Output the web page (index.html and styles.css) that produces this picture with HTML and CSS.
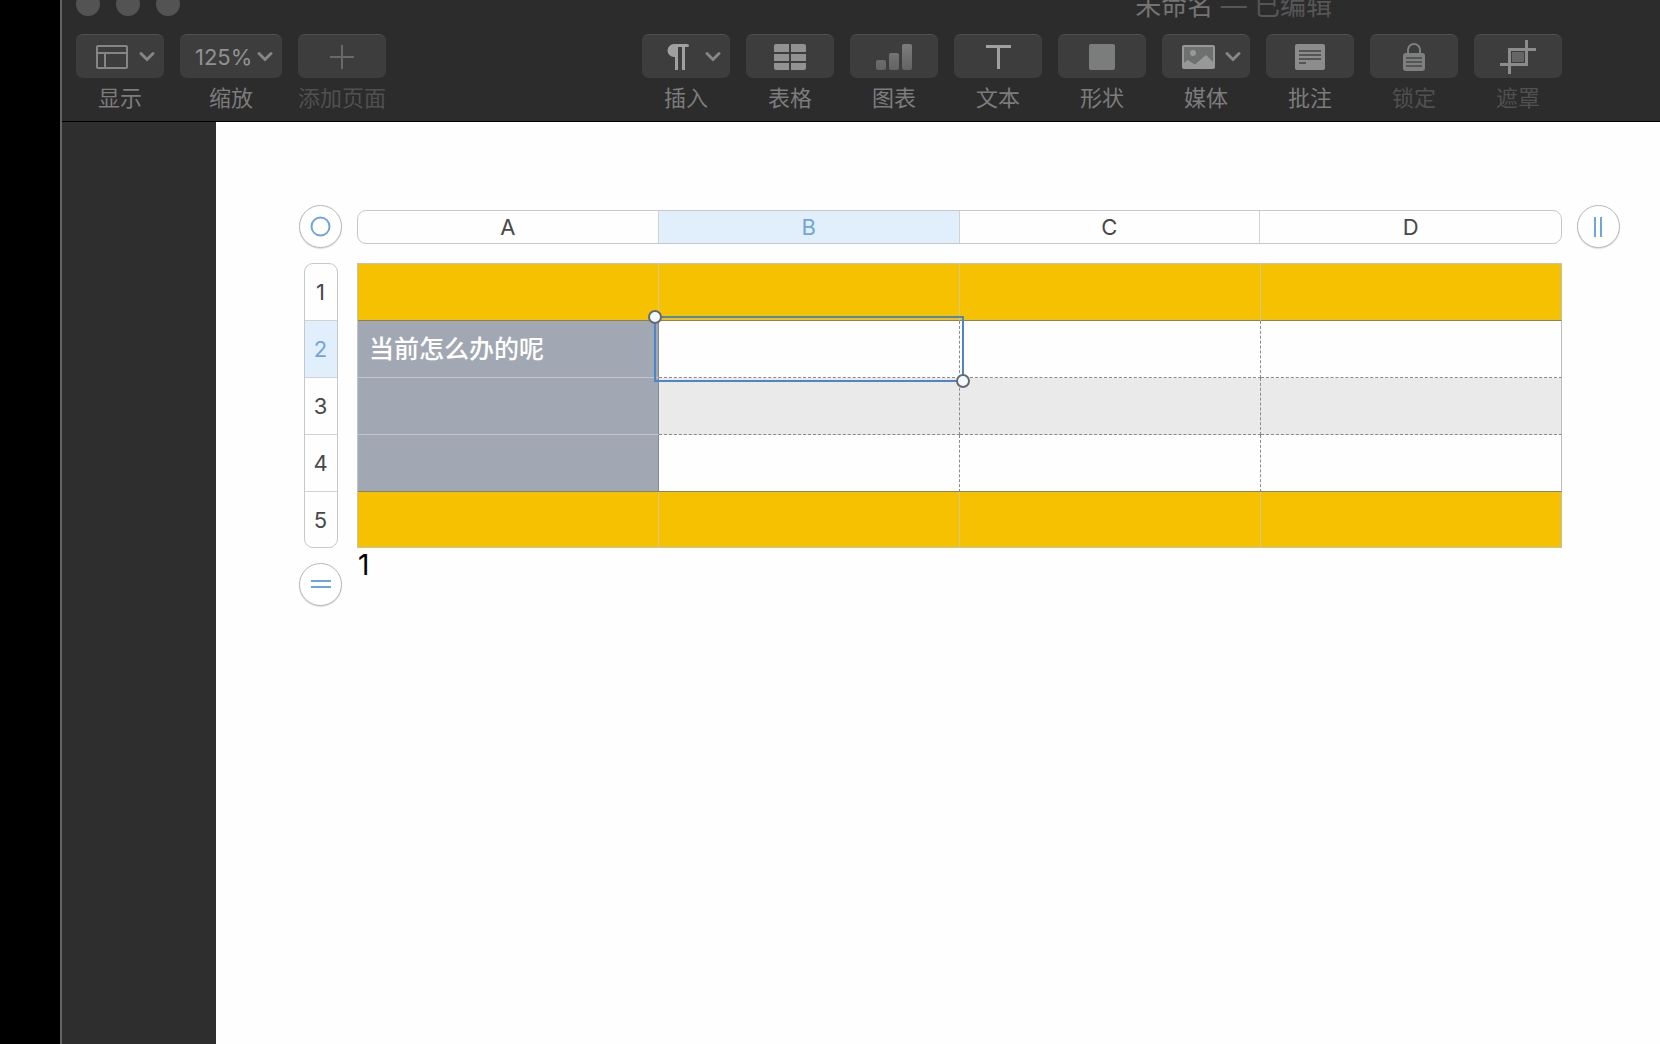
FILE: index.html
```html
<!DOCTYPE html>
<html lang="zh-CN">
<head>
  <meta charset="UTF-8" />
  <meta name="viewport" content="width=device-width, initial-scale=1.0"/>
  <title>未命名</title>
  <link rel="stylesheet" href="styles.css">
</head>
<body>

  <div class="window">
    <header class="toolbar">
      <div class="titlebar">
        <div class="lights"><i></i><i></i><i></i></div>
        <div class="title">未命名 <span>— 已编辑</span></div>
      </div>

      <div class="tools">
        <button type="button" class="tool">
          <span class="face menu">
            <svg class="icon" viewBox="0 0 36 36" fill="none" stroke="#858585" stroke-width="2"><rect x="2" y="7" width="30" height="22" rx="1"/><path d="M2 14H32M10 14V29"/></svg>
            <svg class="chevron" viewBox="0 0 16 12"><path d="M2 2.500L8 8.500L14 2.500"/></svg>
          </span>
          <span class="label">显示</span>
        </button>
        <button type="button" class="tool wide">
          <span class="face menu zoom">
            125%
            <svg class="chevron" viewBox="0 0 16 12"><path d="M2 2.500L8 8.500L14 2.500"/></svg>
          </span>
          <span class="label">缩放</span>
        </button>
        <button type="button" class="tool" disabled>
          <span class="face">
            <svg class="icon" viewBox="0 0 36 36" stroke="#696969" stroke-width="2"><path d="M6 18H30M18 6V30"/></svg>
          </span>
          <span class="label">添加页面</span>
        </button>

        <div class="insert">
          <button type="button" class="tool">
            <span class="face menu">
              <svg class="icon" viewBox="0 0 36 36" fill="#a0a0a0"><path d="M13 5H26Q28 5 28 6.500T26 8H24V31H21V8H17V31H14V18H13A6.500 6.500 0 0 1 13 5Z"/></svg>
              <svg class="chevron" viewBox="0 0 16 12"><path d="M2 2.500L8 8.500L14 2.500"/></svg>
            </span>
            <span class="label">插入</span>
          </button>
          <button type="button" class="tool">
            <span class="face">
              <svg class="icon" viewBox="0 0 36 36" fill="#929292"><path d="M4 5H17V13H2V7Q2 5 4 5ZM19 5H32Q34 5 34 7V13H19ZM2 15H17V22H2ZM19 15H34V22H19ZM2 24H17V31H4Q2 31 2 29ZM19 24H34V29Q34 31 32 31H19Z"/></svg>
            </span>
            <span class="label">表格</span>
          </button>
          <button type="button" class="tool">
            <span class="face">
              <svg class="icon" viewBox="0 0 36 36" fill="url(#bars)"><defs><linearGradient id="bars" gradientUnits="userSpaceOnUse" x1="0" y1="5" x2="0" y2="31"><stop stop-color="#7c7c7c"/><stop offset="1" stop-color="#636363"/></linearGradient></defs><rect x="0" y="21" width="10" height="10" rx="2"/><rect x="13" y="14" width="10" height="17" rx="2"/><rect x="26" y="5" width="10" height="26" rx="2"/></svg>
            </span>
            <span class="label">图表</span>
          </button>
          <button type="button" class="tool">
            <span class="face">
              <svg class="icon" viewBox="0 0 36 36" fill="#a0a0a0"><path d="M6 6H31V9H20V30H17V9H6Z"/></svg>
            </span>
            <span class="label">文本</span>
          </button>
          <button type="button" class="tool">
            <span class="face">
              <svg class="icon" viewBox="0 0 36 36" fill="#7b7d7c"><rect x="5" y="5" width="26" height="26" rx="2"/></svg>
            </span>
            <span class="label">形状</span>
          </button>
          <button type="button" class="tool">
            <span class="face menu">
              <svg class="icon" viewBox="0 0 36 36"><rect x="2" y="7" width="31" height="22" rx="1" fill="#6e706f" stroke="#989898" stroke-width="2"/><circle cx="12" cy="14" r="3" fill="#989898"/><path d="M2 25L6.500 21L14 25.500L25 16L33 24V29H2Z" fill="#989898"/></svg>
              <svg class="chevron" viewBox="0 0 16 12"><path d="M2 2.500L8 8.500L14 2.500"/></svg>
            </span>
            <span class="label">媒体</span>
          </button>
          <button type="button" class="tool">
            <span class="face">
              <svg class="icon" viewBox="0 0 36 36"><rect x="3" y="5" width="30" height="26" rx="2" fill="#8c8c8c"/><path d="M7 12H29M7 16H29M7 20H29M7 24H14" stroke="#555" stroke-width="2"/></svg>
            </span>
            <span class="label">批注</span>
          </button>
          <button type="button" class="tool" disabled>
            <span class="face">
              <svg class="icon" viewBox="0 0 36 36"><rect x="7" y="14" width="22" height="18" rx="3" fill="#7e807f"/><path d="M12 15V11A6 6 0 0 1 24 11V15" fill="none" stroke="#7e807f" stroke-width="2"/><path d="M10 19H26M10 23H26M10 27H26" stroke="#555" stroke-width="2"/></svg>
            </span>
            <span class="label">锁定</span>
          </button>
          <button type="button" class="tool" disabled>
            <span class="face">
              <svg class="icon" viewBox="0 0 36 36"><rect x="12" y="13" width="12" height="10" fill="#656565"/><path d="M0 25.500H26.500V1M36 10.500H9.500V35" fill="none" stroke="#8c8c8c" stroke-width="3"/></svg>
            </span>
            <span class="label">遮罩</span>
          </button>
        </div>
      </div>
    </header>

    <main class="page">
      <div class="sheet">
        <button type="button" class="knob" aria-label="选择表格">
          <svg viewBox="0 0 43 43"><circle cx="21.500" cy="21.500" r="9"/></svg>
        </button>
        <div class="cols">
          <button type="button">A</button>
          <button type="button" class="active">B</button>
          <button type="button">C</button>
          <button type="button">D</button>
        </div>
        <button type="button" class="knob" aria-label="添加列">
          <svg viewBox="0 0 43 43"><path d="M18 12V32M24 12V32"/></svg>
        </button>

        <div class="side">
          <div class="rows">
            <button type="button">1</button>
            <button type="button" class="active">2</button>
            <button type="button">3</button>
            <button type="button">4</button>
            <button type="button">5</button>
          </div>
          <button type="button" class="knob" aria-label="添加行">
            <svg viewBox="0 0 43 43"><path d="M12 18H32M12 24H32"/></svg>
          </button>
        </div>

        <div class="content">
          <table>
            <thead>
              <tr><th></th><th></th><th></th><th></th></tr>
            </thead>
            <tbody>
              <tr>
                <th scope="row">当前怎么办的呢</th>
                <td class="current"><div class="selection"></div></td>
                <td></td>
                <td></td>
              </tr>
              <tr class="alt"><th scope="row"></th><td></td><td></td><td></td></tr>
              <tr><th scope="row"></th><td></td><td></td><td></td></tr>
            </tbody>
            <tfoot>
              <tr><td></td><td></td><td></td><td></td></tr>
            </tfoot>
          </table>
          <p>1</p>
        </div>
      </div>
    </main>
  </div>

</body>
</html>
```
FILE: styles.css
```css
*,
*::before,
*::after {
  box-sizing: border-box;
}

body {
  margin: 0;
  padding-left: 60px;
  background-color: #000;
  font-family: Inter, "Noto Sans CJK SC", sans-serif;
}

button {
  margin: 0;
  padding: 0;
  border: none;
  background: none;
  font: inherit;
  color: inherit;
}

.window {
  display: flex;
  flex-direction: column;
  min-height: 100vh;
  border-left: 2px solid #636363;
  background-color: #2e2e2e;
}

/* toolbar */
.toolbar {
  height: 122px;
  padding: 0 98px 0 14px;
  border-bottom: 1px solid #000;
  background-color: #2c2c2c;
  overflow: hidden;
}

.titlebar {
  display: flex;
  justify-content: space-between;
  align-items: flex-start;
  height: 34px;
  padding-right: 230px;
}

.lights {
  display: flex;
  gap: 16px;
  margin-top: -8px;
}

.lights i {
  width: 24px;
  height: 24px;
  border-radius: 50%;
  background-color: #535353;
}

.title {
  margin-top: -13px;
  font-size: 26px;
  line-height: 38px;
  color: #747474;
  white-space: nowrap;
}

.title span {
  color: #565656;
}

.tools,
.insert {
  display: flex;
  gap: 16px;
}

.insert {
  margin-left: auto;
}

.tool {
  width: 88px;
  color: #7c7c7c;
}

.tool.wide {
  width: 102px;
}

.tool:disabled {
  color: #505050;
}

.face {
  display: flex;
  align-items: center;
  justify-content: center;
  height: 44px;
  border-top: 1px solid #515151;
  border-radius: 7px;
  background-color: #3d3d3d;
}

.menu {
  justify-content: space-between;
  padding: 0 9px 0 19px;
}

.zoom {
  padding-left: 15px;
  font-size: 22px;
  color: #929292;
}

.icon {
  width: 36px;
  height: 36px;
}

.chevron {
  width: 16px;
  height: 12px;
  fill: none;
  stroke: #858585;
  stroke-width: 3px;
  stroke-linecap: round;
}

.label {
  display: block;
  margin-top: 5px;
  font-size: 22px;
  line-height: 30px;
  white-space: nowrap;
}

/* page */
.page {
  flex: 1;
  margin-left: 154px;
  padding: 83px 40px 40px 83px;
  background-color: #fefefe;
}

.sheet {
  display: grid;
  grid-template-columns: 43px 1fr 43px;
  gap: 15px;
  align-items: center;
}

.knob {
  width: 43px;
  height: 43px;
  border: 1px solid #b8b8b8;
  border-radius: 50%;
  background-color: #fff;
  box-shadow: 0 1px 1px #ddd;
}

.knob svg {
  display: block;
  margin: -1px;
  width: 43px;
  height: 43px;
  fill: none;
  stroke: #70a5dc;
  stroke-width: 2px;
}

.cols,
.rows {
  display: grid;
  border: 1px solid #c6c8ca;
  border-radius: 9px;
  overflow: hidden;
  font-size: 22px;
  color: #484848;
}

.cols {
  grid-template-columns: repeat(4, 1fr);
  height: 34px;
}

.cols button {
  border-right: 1px solid #d0d2d4;
}

.rows button {
  border-bottom: 1px solid #d0d2d4;
}

.cols button:last-child,
.rows button:last-child {
  border: none;
}

.cols .active,
.rows .active {
  background-color: #e1effc;
  color: #74a5d4;
}

.side {
  display: flex;
  flex-direction: column;
  align-items: center;
  gap: 15px;
}

.rows {
  width: 34px;
  grid-template-rows: repeat(4, 57px) 55px;
}

.content {
  align-self: start;
}

table {
  width: 100%;
  table-layout: fixed;
  border-collapse: separate;
  border-spacing: 0;
  border: solid #c0c3c8;
  border-width: 1px 0 0 1px;
}

th,
td {
  height: 57px;
  padding: 0 11px;
  border: dashed #8b8b8b;
  border-width: 0 1px 1px 0;
}

thead th,
tfoot td {
  background-color: #f6c200;
  border-right: 1px solid #d3c88a;
  border-bottom: 1px solid #85816f;
}

tfoot td {
  height: 56px;
  border-bottom-color: #c9c5a5;
}

tbody th {
  border-right: 1px solid #85888d;
  border-bottom: 1px solid #c4c8cc;
  background-color: #a1a8b3;
  font-size: 25px;
  line-height: 36px;
  font-weight: 500;
  text-align: left;
  color: #fff;
}

.alt td {
  background-color: #eaeaea;
}

tbody tr:last-child > * {
  border-bottom: 1px solid #85816f;
}

tr > :last-child {
  border-right: 1px solid #b9bdc1;
}

.current {
  position: relative;
}

.selection {
  position: absolute;
  inset: -5px;
  border: 2px solid #4c86c5;
}

.selection::before,
.selection::after {
  content: '';
  position: absolute;
  width: 14px;
  height: 14px;
  border: 2px solid #656a72;
  border-radius: 50%;
  background-color: #f4f9ff;
}

.selection::before {
  top: -8px;
  left: -8px;
}

.selection::after {
  right: -8px;
  bottom: -8px;
}

.content p {
  margin: 0 0 0 1px;
  font-size: 28px;
  line-height: 34px;
  color: #000;
}
```
